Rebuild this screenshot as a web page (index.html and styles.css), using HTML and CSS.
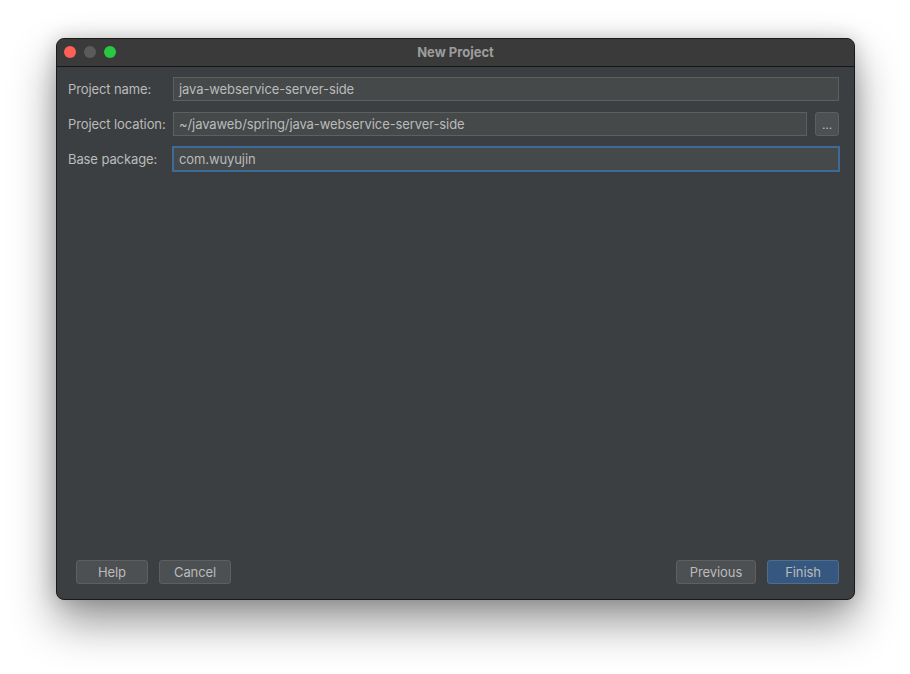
FILE: index.html
```html
<!DOCTYPE html>
<html>
<head>
<meta charset="utf-8">
<link rel="stylesheet" href="styles.css">
</head>
<body>
<div class="window">
  <div class="titlebar">
    <div class="lights">
      <span class="light red"></span>
      <span class="light gray"></span>
      <span class="light green"></span>
    </div>
    <div class="title">New Project</div>
  </div>
  <div class="content">
    <div class="form">
      <label class="label">Project name:</label>
      <div class="field">java-webservice-server-side</div>
      <label class="label">Project location:</label>
      <div class="fieldrow">
        <div class="field grow">~/javaweb/spring/java-webservice-server-side</div>
        <div class="browse">...</div>
      </div>
      <label class="label">Base package:</label>
      <div class="field focused">com.wuyujin</div>
    </div>
    <div class="footer">
      <div class="group">
        <div class="btn w72">Help</div>
        <div class="btn w72">Cancel</div>
      </div>
      <div class="group">
        <div class="btn w80">Previous</div>
        <div class="btn w72 primary">Finish</div>
      </div>
    </div>
  </div>
</div>
</body>
</html>
```
FILE: styles.css
```css
html, body {
  margin: 0;
  padding: 0;
  background: #ffffff;
}
body {
  box-sizing: border-box;
  min-height: 674px;
  padding: 38px 0 0 56px;
  font-family: Inter, "Liberation Sans", sans-serif;
  font-size: 13px;
  letter-spacing: -0.1px;
  color: #bbbbbb;
}
.window {
  width: 799px;
  height: 562px;
  box-sizing: border-box;
  background: #3c3f41;
  border-radius: 8px;
  border: 1px solid #1a1a1a;
  box-shadow: 0 22px 45px rgba(0,0,0,0.42), 0 0 20px rgba(0,0,0,0.18);
  display: flex;
  flex-direction: column;
  overflow: hidden;
}
.titlebar {
  height: 27px;
  flex: none;
  background: #3a3a3a;
  border-bottom: 1px solid #161616;
  position: relative;
  display: flex;
  align-items: center;
  justify-content: center;
}
.lights {
  position: absolute;
  left: 7px;
  top: 7px;
  display: flex;
  gap: 8px;
}
.light {
  width: 12px;
  height: 12px;
  border-radius: 50%;
  display: block;
}
.red { background: #fe5f57; }
.gray { background: #5b5b5b; }
.green { background: #28c840; }
.title {
  font-weight: 700;
  color: #9d9d9d;
  font-size: 13px;
  letter-spacing: 0;
  margin-top: -2px;
}
.content {
  flex: 1;
  display: flex;
  flex-direction: column;
  justify-content: space-between;
  padding: 10px 15px 15px 11px;
}
.form {
  display: grid;
  grid-template-columns: 105px 1fr;
  row-gap: 11px;
  align-items: center;
}
.label {
  white-space: nowrap;
}
.field {
  height: 24px;
  box-sizing: border-box;
  background: #45494a;
  border: 1px solid #5e6060;
  padding: 0 5px;
  line-height: 22px;
  color: #bbbbbb;
  white-space: nowrap;
}
.field.focused {
  border-color: #3d6a99;
  box-shadow: 0 0 0 1px #3d6a99;
}
.fieldrow {
  display: flex;
  gap: 8px;
}
.grow { flex: 1; }
.browse {
  width: 24px;
  height: 24px;
  box-sizing: border-box;
  background: #4c5052;
  border: 1px solid #5e6060;
  border-radius: 3px;
  text-align: center;
  line-height: 24px;
  font-size: 12px;
  color: #bbbbbb;
}
.footer {
  display: flex;
  justify-content: space-between;
  padding-left: 8px;
}
.group {
  display: flex;
  gap: 11px;
}
.btn {
  height: 24px;
  box-sizing: border-box;
  background: #4c5052;
  border: 1px solid #5e6060;
  border-radius: 3px;
  text-align: center;
  line-height: 22px;
  color: #bbbbbb;
}
.w72 { width: 72px; }
.w80 { width: 80px; }
.btn.primary {
  background: #365880;
  border-color: #4c708c;
  color: #bbbbbb;
}
```
